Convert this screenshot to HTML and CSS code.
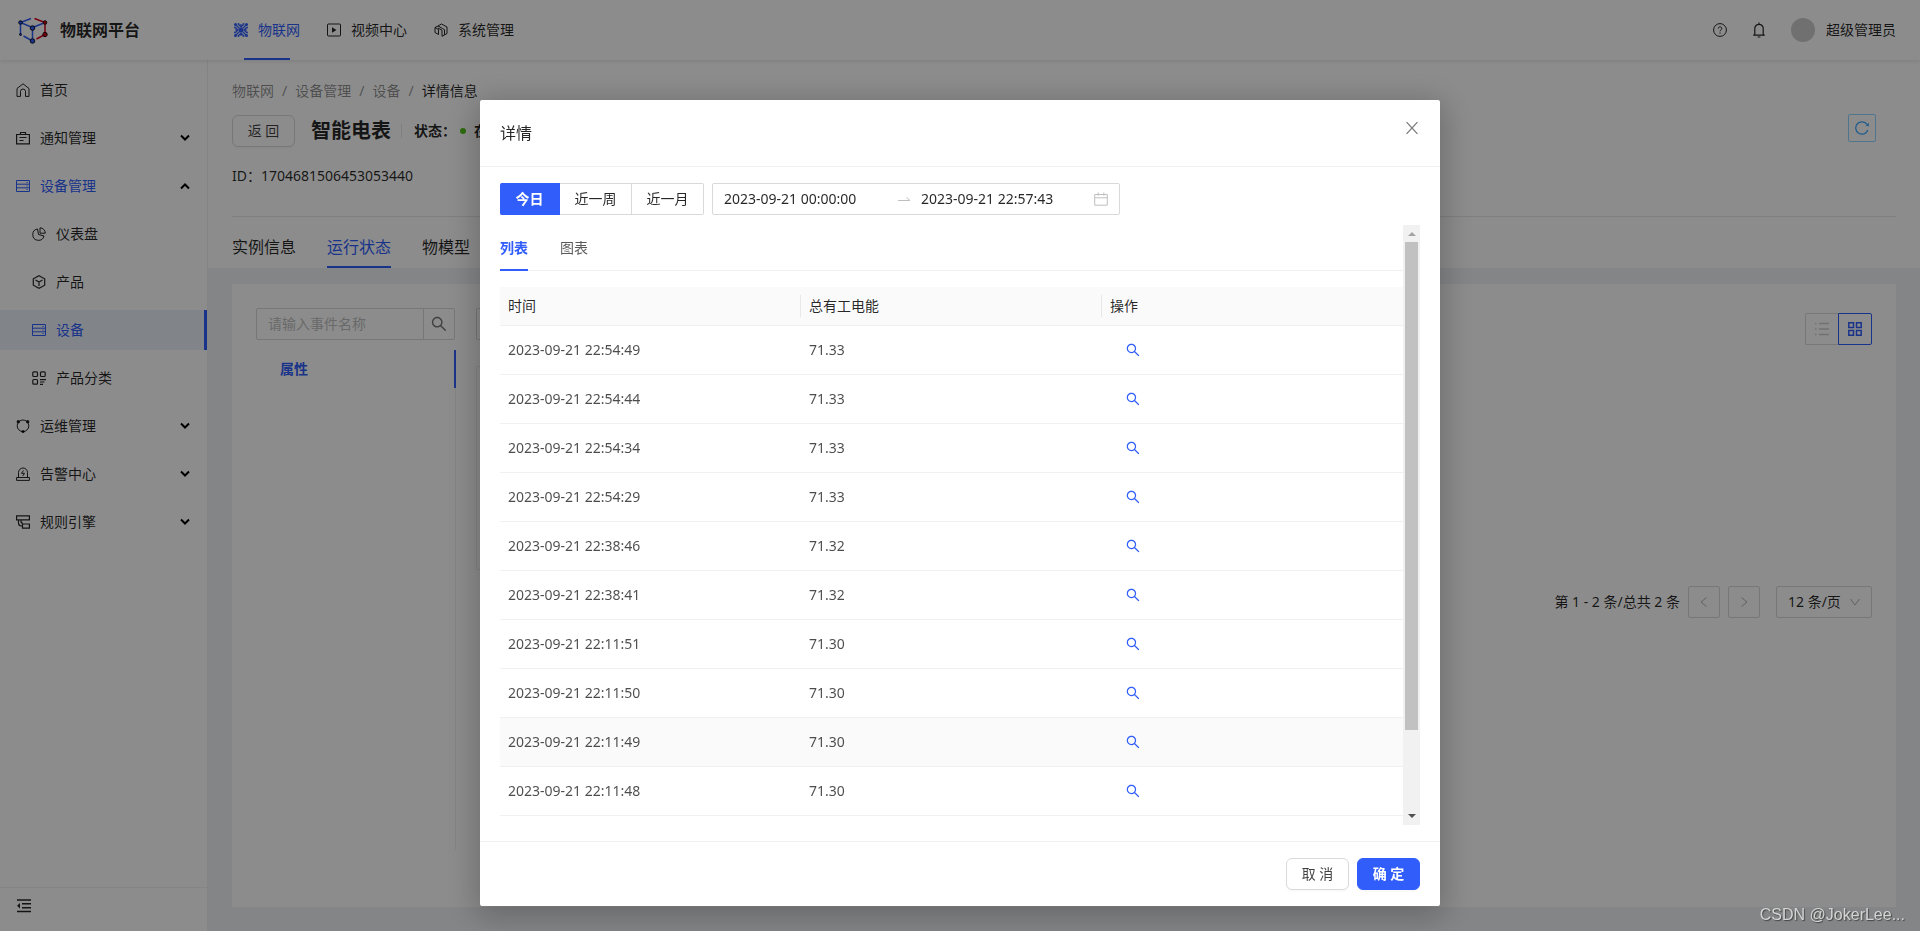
FILE: index.html
```html
<!DOCTYPE html>
<html lang="zh-CN">
<head>
<meta charset="utf-8">
<title>物联网平台</title>
<link rel="stylesheet" href="styles.css">
</head>
<body>
<svg class="defs" aria-hidden="true">
  <symbol id="search" viewBox="64 64 896 896"><path fill="currentColor" stroke="none" d="M909.6 854.5L649.9 594.8C690.2 542.7 712 479 712 412c0-80.2-31.3-155.4-87.9-212.1-56.6-56.7-132-87.9-212.1-87.9s-155.5 31.3-212.1 87.9C143.2 256.5 112 331.8 112 412c0 80.1 31.3 155.5 87.9 212.1C256.5 680.8 331.8 712 412 712c67 0 130.6-21.8 182.7-62l259.7 259.6a8.2 8.2 0 0011.6 0l43.6-43.5a8.2 8.2 0 000-11.6zM570.4 570.4C528 612.7 471.8 636 412 636s-116-23.3-158.4-65.6C211.3 528 188 471.8 188 412s23.3-116.1 65.6-158.4C296 211.3 352.2 188 412 188s116.1 23.2 158.4 65.6S636 352.2 636 412s-23.3 116.1-65.6 158.4z"/></symbol>
  <symbol id="server" viewBox="0 0 14 14"><path d="M.5 1.5h13v11H.5zM.5 5.2h13M.5 8.8h13M10.5 3.4h1.200M10.5 7h1.2M10.5 10.6h1.2"/></symbol>
  <symbol id="down" viewBox="0 0 10 10"><path stroke-width="2" d="M1 2.500l4 4 4-4"/></symbol>
</svg>

<header class="header">
  <a class="brand" href="#">
    <svg class="logo" viewBox="0 0 30 28" fill="none">
      <g stroke="#315efb" stroke-width="1.5"><path d="M13 2.500L2.500 6.500v12M2.500 6.500l12 5v13.500M26 7l-11.500 4.500M5.500 20l9 5"/></g>
      <g stroke="#d9001b" stroke-width="1.5"><path d="M16.500 2.500l10.500 4v12l-8.500 4.500"/></g>
      <g fill="#315efb"><circle cx="2.500" cy="6.500" r="1.800"/><circle cx="14.500" cy="12" r="2.300"/><circle cx="14.500" cy="25" r="2.300"/><circle cx="2.500" cy="18.500" r="1"/></g>
      <g fill="#d9001b"><circle cx="27" cy="6.500" r="1.800"/><circle cx="27" cy="18.500" r="2.200"/></g>
    </svg>
    <span>物联网平台</span>
  </a>
  <nav class="topnav">
    <a class="on" href="#"><svg class="ic" viewBox="0 0 14 14"><path stroke-width="1.200" d="M7 1v12M1 7h12M2 2l10 10M12 2L2 12M4.500 1.500L7 4l2.500-2.500M4.500 12.500L7 10l2.500 2.500M1.500 4.500L4 7 1.500 9.500M12.500 4.500L10 7l2.500 2.500"/><g fill="currentColor" stroke="none"><circle cx="7" cy="7" r="2"/><circle cx="1.500" cy="1.500" r="1.500"/><circle cx="12.500" cy="1.500" r="1.500"/><circle cx="1.500" cy="12.500" r="1.500"/><circle cx="12.500" cy="12.500" r="1.500"/><circle cx="4.500" cy="1" r="1"/><circle cx="9.500" cy="1" r="1"/><circle cx="4.500" cy="13" r="1"/><circle cx="9.500" cy="13" r="1"/><circle cx="1" cy="4.500" r="1"/><circle cx="1" cy="9.500" r="1"/><circle cx="13" cy="4.500" r="1"/><circle cx="13" cy="9.500" r="1"/></g></svg>物联网</a>
    <a href="#"><svg class="ic" viewBox="0 0 14 14"><rect x=".5" y="1" width="13" height="12" rx="1"/><path fill="currentColor" stroke="none" d="M5 4.200v5.600L9.500 7z"/></svg>视频中心</a>
    <a href="#"><svg class="ic" viewBox="0 0 14 14"><path d="M4.500 11.500L1 9.500v-5l3-1.500L7.500 1 13 4v6.500L8 13.300V7.200L4 5M1 4.500l3.500 2v5M4 3l4.500 2.500 2 1.200v5"/></svg>系统管理</a>
  </nav>
  <div class="tools">
    <button class="plain" aria-label="帮助"><svg class="ic" viewBox="0 0 14 14"><circle cx="7" cy="7" r="6.400"/><path d="M5.200 5.600C5.200 3.200 8.800 3.200 8.800 5.500 8.800 6.800 7 6.900 7 8.300M7 9.400v1.200"/></svg></button>
    <button class="plain" aria-label="通知"><svg class="ic bell" viewBox="0 0 14 16"><path stroke-width="1.200" d="M7 .5V2M2.800 13V6.500a4.200 4.200 0 018.400 0V13M1.200 13.200h11.600M5.600 15h2.800"/></svg></button>
    <div class="user"><span class="avatar"></span>超级管理员</div>
  </div>
</header>

<div class="shell">
  <aside class="side">
    <nav class="menu">
      <a href="#"><svg class="ic" viewBox="0 0 14 14"><path d="M1 5.500L7 .8l6 4.700v7.900H9.500V8.500a2.500 2.500 0 00-5 0v4.900H1z"/></svg>首页</a>
      <a href="#"><svg class="ic" viewBox="0 0 14 14"><path stroke-width="1.200" d="M.6 3.500h12.800v9.400H.6zM4.500 3.500v-2h5v2M3.500 6.500h7M3.500 9.500h4"/></svg>通知管理<svg class="arr"><use href="#down"/></svg></a>
      <a class="on" href="#"><svg class="ic"><use href="#server"/></svg>设备管理<svg class="arr up"><use href="#down"/></svg></a>
      <a class="sub" href="#"><svg class="ic" viewBox="0 0 14 14"><path d="M5.500 2A5.700 5.700 0 1012 9L6.500 7.500zM8 .8V6.200h5.300A5.500 5.500 0 008 .8z"/></svg>仪表盘</a>
      <a class="sub" href="#"><svg class="ic" viewBox="0 0 14 14"><path stroke-width="1.200" d="M7 .7l5.700 3.100v6.400L7 13.300l-5.700-3.100V3.800zM3.500 5L7 7l3.500-2M7 7v4"/></svg>产品</a>
      <a class="sub on sel" href="#"><svg class="ic"><use href="#server"/></svg>设备</a>
      <a class="sub" href="#"><svg class="ic" viewBox="0 0 14 14"><g stroke-width="1.200"><rect x=".8" y=".8" width="4.700" height="4.700" rx="1"/><rect x="8.500" y=".8" width="4.700" height="4.700" rx="1"/><rect x=".8" y="8.500" width="4.700" height="4.700" rx="1"/><path d="M8 8.700h6M8 11h4.500M8 13.300h3"/></g></svg>产品分类</a>
      <a href="#"><svg class="ic" viewBox="0 0 14 14"><circle cx="7" cy="6.800" r="5.800"/><g fill="currentColor" stroke="none"><circle cx="2.300" cy="2.800" r="1.700"/><circle cx="11.700" cy="2.800" r="1.700"/><circle cx="7" cy="12.500" r="1.500"/></g></svg>运维管理<svg class="arr"><use href="#down"/></svg></a>
      <a href="#"><svg class="ic" viewBox="0 0 14 14"><path d="M2.500 10.200V5.500a4.500 4.500 0 019 0v4.700M.6 10.500h12.800v2.900H.6zM7.500 3.500L5.500 6.300h3L6.700 9"/></svg>告警中心<svg class="arr"><use href="#down"/></svg></a>
      <a href="#"><svg class="ic" viewBox="0 0 14 14"><path stroke-width="1.200" d="M.6.800h12.800v4H.6zM6.500 9h6.900v4.200H6.500zM2.500 4.800V8a3 3 0 003 3h1M5 4.800v1.500a2 2 0 002 2"/></svg>规则引擎<svg class="arr"><use href="#down"/></svg></a>
    </nav>
    <div class="fold"><button class="plain" aria-label="收起菜单"><svg class="ic" viewBox="0 0 14 14"><path stroke-width="1.400" d="M0 1h14M5 4.700h9M5 8.700h9M0 12.500h14"/><path fill="currentColor" stroke="none" d="M3 4v5.500L0 6.700z"/></svg></button></div>
  </aside>

  <main class="main">
    <section class="top">
      <div class="crumbs"><a href="#">物联网</a><i>/</i><a href="#">设备管理</a><i>/</i><a href="#">设备</a><i>/</i><span>详情信息</span></div>
      <div class="titlebar">
        <button class="btn back">返 回</button>
        <h1>智能电表</h1>
        <span class="vline"></span>
        <strong class="state">状态：<span class="dot"></span>在线</strong>
        <button class="refresh" aria-label="刷新"><svg class="ic" viewBox="0 0 14 14"><path stroke-width="1.300" d="M12.800 9A6.200 6.200 0 1112 3.400"/><path fill="currentColor" stroke="none" d="M13.800 1.800v3.700l-3.300-.9z"/></svg></button>
      </div>
      <div class="ident">ID：1704681506453053440</div>
      <div class="tabs"><button>实例信息</button><button class="on">运行状态</button><button>物模型</button></div>
    </section>
    <section class="card">
      <div class="props">
        <div class="find"><input type="text" placeholder="请输入事件名称" aria-label="事件名称"><button aria-label="搜索"><svg><use href="#search"/></svg></button></div>
        <div class="tree"><button>属性</button></div>
      </div>
      <div class="values">
        <div class="bar">
          <div class="box"></div>
          <div class="modes"><button aria-label="列表视图"><svg class="ic" viewBox="0 0 14 14"><path stroke-width="1.400" d="M0 1.500h1.500M0 7h1.500M0 12.500h1.500M4 1.500h10M4 7h10M4 12.500h10"/></svg></button><button class="on" aria-label="卡片视图"><svg class="ic" viewBox="0 0 14 14"><path stroke-width="1.500" d="M.8.800h4.700v4.700H.8zM8.500.800h4.700v4.700H8.500zM.8 8.500h4.700v4.700H.8zM8.500 8.500h4.700v4.700H8.500z"/></svg></button></div>
        </div>
        <div class="tile"></div>
        <div class="pager">
          <span>第 1 - 2 条/总共 2 条</span>
          <button aria-label="上一页"><svg viewBox="0 0 10 10"><path d="M7.500 .5L2 5l5.500 4.500"/></svg></button>
          <button aria-label="下一页"><svg viewBox="0 0 10 10"><path d="M2.500 .5L8 5 2.500 9.500"/></svg></button>
          <div class="size"><select aria-label="每页条数"><option>12 条/页</option></select><svg viewBox="0 0 10 10"><path d="M.5 2L5 8l4.500-6"/></svg></div>
        </div>
      </div>
    </section>
  </main>
</div>

<div class="mask">
  <div class="modal" role="dialog" aria-label="详情">
    <div class="mhead"><h2>详情</h2><button class="plain" aria-label="关闭"><svg class="close" viewBox="0 0 12 12"><path stroke-width="1.200" d="M.5 0l11 12M11.500 0l-11 12"/></svg></button></div>
    <div class="mbody">
      <div class="filters">
        <div class="radios">
          <label class="on"><input type="radio" name="span" checked>今日</label><label><input type="radio" name="span">近一周</label><label><input type="radio" name="span">近一月</label>
        </div>
        <div class="range">
          <input type="text" value="2023-09-21 00:00:00" aria-label="开始时间">
          <svg class="to" viewBox="0 0 14 14"><path d="M1 8.500h12L9.500 5.500"/></svg>
          <input type="text" value="2023-09-21 22:57:43" aria-label="结束时间">
          <svg class="ic cal" viewBox="0 0 14 14"><path d="M.7 2.500h12.600v10.700H.7zM.7 5.800h12.600M4.200.5v3.200M9.800.5v3.200"/></svg>
        </div>
      </div>
      <div class="scroll">
        <div class="inner">
          <div class="mtabs"><button class="on">列表</button><button>图表</button></div>
          <table>
            <thead><tr><th>时间</th><th>总有工电能</th><th>操作</th></tr></thead>
            <tbody>
              <tr><td>2023-09-21 22:54:49</td><td>71.33</td><td><button aria-label="查看"><svg><use href="#search"/></svg></button></td></tr>
              <tr><td>2023-09-21 22:54:44</td><td>71.33</td><td><button aria-label="查看"><svg><use href="#search"/></svg></button></td></tr>
              <tr><td>2023-09-21 22:54:34</td><td>71.33</td><td><button aria-label="查看"><svg><use href="#search"/></svg></button></td></tr>
              <tr><td>2023-09-21 22:54:29</td><td>71.33</td><td><button aria-label="查看"><svg><use href="#search"/></svg></button></td></tr>
              <tr><td>2023-09-21 22:38:46</td><td>71.32</td><td><button aria-label="查看"><svg><use href="#search"/></svg></button></td></tr>
              <tr><td>2023-09-21 22:38:41</td><td>71.32</td><td><button aria-label="查看"><svg><use href="#search"/></svg></button></td></tr>
              <tr><td>2023-09-21 22:11:51</td><td>71.30</td><td><button aria-label="查看"><svg><use href="#search"/></svg></button></td></tr>
              <tr><td>2023-09-21 22:11:50</td><td>71.30</td><td><button aria-label="查看"><svg><use href="#search"/></svg></button></td></tr>
              <tr class="hover"><td>2023-09-21 22:11:49</td><td>71.30</td><td><button aria-label="查看"><svg><use href="#search"/></svg></button></td></tr>
              <tr><td>2023-09-21 22:11:48</td><td>71.30</td><td><button aria-label="查看"><svg><use href="#search"/></svg></button></td></tr>
            </tbody>
          </table>
        </div>
        <div class="sbar"><span class="tri-up"></span><span class="thumb"></span><span class="tri-down"></span></div>
      </div>
    </div>
    <div class="mfoot"><button class="btn">取 消</button><button class="btn primary">确 定</button></div>
  </div>
</div>
<div class="mark">CSDN @JokerLee...</div>
</body>
</html>
```
FILE: styles.css
```css
* { box-sizing: border-box; }
body {
  margin: 0;
  min-height: 100vh;
  display: flex;
  flex-direction: column;
  background: #fff;
  color: rgba(0, 0, 0, .85);
  font: 14px/22px "Noto Sans", "Noto Sans CJK SC", sans-serif;
}
button, input, select { font: inherit; color: inherit; margin: 0; }
button { cursor: pointer; padding: 0; background: none; border: 0; }
a { color: inherit; text-decoration: none; }
svg { fill: none; stroke: currentColor; flex: none; display: block; }
.defs { position: absolute; width: 0; height: 0; }
.ic { width: 14px; height: 14px; }

.header {
  position: relative;
  height: 60px;
  display: flex;
  align-items: center;
  padding: 0 24px 0 18px;
  box-shadow: 0 1px 4px rgba(0, 21, 41, .12);
}
.brand { display: flex; align-items: center; gap: 12px; width: 216px; font-size: 16px; font-weight: bold; }
.logo { width: 30px; height: 28px; }
.topnav { display: flex; gap: 27px; align-self: stretch; }
.topnav a { position: relative; display: flex; align-items: center; gap: 10px; }
.on { color: #315efb; }
.topnav .on::after { content: ""; position: absolute; bottom: 0; left: 10px; right: 10px; height: 2px; background: #315efb; }
.tools { margin-left: auto; display: flex; align-items: center; gap: 25px; }
.bell { height: 16px; }
.user { display: flex; align-items: center; gap: 11px; }
.avatar { width: 24px; height: 24px; border-radius: 50%; background: #ccc; }

.shell { flex: 1; display: flex; }
.side { width: 208px; flex: none; display: flex; flex-direction: column; border-right: 1px solid #f0f0f0; }
.menu { flex: 1; display: flex; flex-direction: column; gap: 8px; padding-top: 10px; }
.menu a { height: 40px; display: flex; align-items: center; gap: 10px; padding: 0 17px 0 16px; }
.menu .sub { padding-left: 32px; }
.menu .sel { background: #ebf3fc; border-right: 3px solid #315efb; }
.arr { width: 10px; height: 10px; margin-left: auto; color: #000; }
.up { transform: rotate(180deg); }
.fold { height: 44px; display: flex; align-items: center; padding: 0 17px 8px; border-top: 1px solid #f0f0f0; }

.main { flex: 1; display: flex; flex-direction: column; background: #f0f2f5; }
.top { padding: 20px 24px 0; background: #fff; }
.crumbs { display: flex; color: rgba(0, 0, 0, .45); }
.crumbs i { margin: 0 8px; font-style: normal; }
.crumbs span { color: rgba(0, 0, 0, .85); }
.titlebar { display: flex; align-items: center; margin-top: 13px; height: 32px; }
.btn { width: 63px; height: 32px; border: 1px solid #d9d9d9; border-radius: 6px; background: #fff; box-shadow: 0 2px 0 rgba(0, 0, 0, .02); color: rgba(0, 0, 0, .75); }
h1 { margin: 0 10px 0 16px; font-size: 20px; line-height: 32px; }
.vline { width: 1px; height: 14px; background: #e8e8e8; }
.state { display: flex; align-items: center; margin-left: 12px; }
.dot { width: 6px; height: 6px; border-radius: 50%; background: #52c41a; margin: 0 8px 0 4px; }
.refresh { width: 28px; height: 28px; margin: 0 20px 6px auto; display: grid; place-items: center; border: 1px solid #91d5ff; border-radius: 2px; color: #40a9ff; }
.ident { margin-top: 18px; padding-bottom: 29px; border-bottom: 1px solid #e8e8e8; }
.tabs { display: flex; gap: 31px; }
.tabs button { height: 51px; padding-top: 10px; font-size: 16px; border-bottom: 2px solid transparent; }
.tabs .on { border-color: #315efb; }

.card { flex: 1; display: flex; gap: 20px; margin: 16px 24px 24px; padding: 24px; background: #fff; }
.props { width: 200px; display: flex; flex-direction: column; gap: 10px; }
.find { display: flex; width: 199px; height: 32px; border: 1px solid #d9d9d9; border-radius: 2px; }
.find input { flex: 1; min-width: 0; border: 0; padding: 0 11px; background: none; }
.find input::placeholder { color: #bfbfbf; }
.find button { width: 31px; border-left: 1px solid #d9d9d9; display: grid; place-items: center; color: rgba(0, 0, 0, .55); }
.find svg { width: 16px; height: 16px; }
.tree { flex: 1; margin-bottom: 33px; border-right: 1px solid #f0f0f0; display: flex; align-items: flex-start; }
.tree button { flex: 1; margin-right: -1px; height: 38px; padding-left: 24px; text-align: left; font-weight: bold; color: #315efb; border-right: 2px solid #315efb; }
.values { flex: 1; display: flex; flex-direction: column; }
.bar { display: flex; justify-content: space-between; height: 58px; }
.box { width: 200px; height: 32px; border: 1px solid #d9d9d9; border-radius: 2px; }
.modes { display: flex; margin-top: 5px; }
.modes button { width: 33px; height: 32px; display: grid; place-items: center; border: 1px solid #d9d9d9; border-right: 0; border-radius: 2px 0 0 2px; color: #d0d0d0; }
.modes .on { width: 34px; border: 1px solid #315efb; border-radius: 0 2px 2px 0; color: #315efb; }
.tile { width: 400px; height: 204px; border: 1px solid #ebebeb; border-radius: 2px; }
.pager { display: flex; align-items: center; justify-content: flex-end; gap: 8px; margin-top: 16px; }
.pager button { width: 32px; height: 32px; display: grid; place-items: center; border: 1px solid #d9d9d9; border-radius: 2px; color: #b0b0b0; }
.pager svg { width: 10px; height: 10px; }
.size { position: relative; margin-left: 8px; color: #b0b0b0; }
.size select { appearance: none; width: 96px; height: 32px; padding: 0 11px; border: 1px solid #d9d9d9; border-radius: 2px; background: none; color: rgba(0, 0, 0, .85); }
.size svg { position: absolute; right: 12px; top: 11px; }

.mask { position: fixed; inset: 0; padding-top: 100px; background: rgba(0, 0, 0, .45); }
.modal { width: 50%; margin: 0 auto; background: #fff; border-radius: 2px; box-shadow: 0 6px 32px 4px rgba(0, 0, 0, .24); }
.mhead { display: flex; align-items: flex-start; justify-content: space-between; padding: 22px 20px; border-bottom: 1px solid #f0f0f0; }
h2 { margin: 0; font-size: 16px; line-height: 22px; font-weight: normal; }
.close { width: 12px; height: 12px; margin-right: 2px; color: rgba(0, 0, 0, .5); }
.mbody { padding: 16px 20px; }
.filters { display: flex; gap: 8px; margin-bottom: 10px; }
.radios { display: flex; text-align: center; }
.radios label { width: 72px; height: 32px; line-height: 30px; border: 1px solid #d9d9d9; border-left: 0; }
.radios label:last-child { border-radius: 0 2px 2px 0; }
.radios input { position: absolute; opacity: 0; }
.radios .on { width: 60px; background: #315efb; border-color: #315efb; color: #fff; font-weight: bold; border-radius: 2px 0 0 2px; }
.range { width: 408px; height: 32px; display: flex; align-items: center; padding: 0 11px; border: 1px solid #d9d9d9; border-radius: 2px; }
.range input { flex: 1; min-width: 0; border: 0; padding: 0; background: none; }
.to { width: 14px; height: 14px; margin-right: 10px; color: #bfbfbf; }
.cal { color: #bfbfbf; }
.scroll { height: 600px; display: flex; overflow: hidden; }
.inner { flex: 1; }
.mtabs { display: flex; gap: 32px; height: 46px; border-bottom: 1px solid #f0f0f0; margin-bottom: 16px; color: rgba(0, 0, 0, .65); }
.mtabs button { height: 46px; padding-top: 2px; border-bottom: 2px solid transparent; }
.mtabs .on { color: #315efb; font-weight: bold; border-color: #315efb; }
table { width: 100%; table-layout: fixed; border-collapse: separate; border-spacing: 0; }
th, td { padding: 8px; text-align: left; border-bottom: 1px solid #f0f0f0; }
th { position: relative; height: 39px; background: #fafafa; font-weight: normal; }
th:not(:last-child)::after { content: ""; position: absolute; right: 0; top: 8px; width: 1px; height: 22px; background: #e8e8e8; }
td { height: 49px; color: rgba(0, 0, 0, .7); }
td button { display: block; margin-left: 16px; color: #315efb; }
td svg { width: 14px; height: 14px; }
.hover td { background: #fafafa; }
.sbar { width: 17px; display: flex; flex-direction: column; align-items: center; padding: 7px 0; background: #f1f1f1; }
.tri-up { border: 4px solid transparent; border-top: 0; border-bottom-color: #a3a3a3; }
.thumb { width: 13px; height: 488px; margin-top: 6px; background: #c1c1c1; }
.tri-down { margin-top: auto; border: 4px solid transparent; border-bottom: 0; border-top-color: #505050; }
.mfoot { display: flex; justify-content: flex-end; gap: 8px; padding: 16px 20px; border-top: 1px solid #f0f0f0; }
.primary { background: #315efb; border-color: #315efb; color: #fff; font-weight: bold; }
.mark { position: fixed; right: 15px; bottom: 5px; font-family: "Liberation Sans", sans-serif; font-size: 16px; color: #d4d4d4; text-shadow: 1px 1px 1px #444; }
```
